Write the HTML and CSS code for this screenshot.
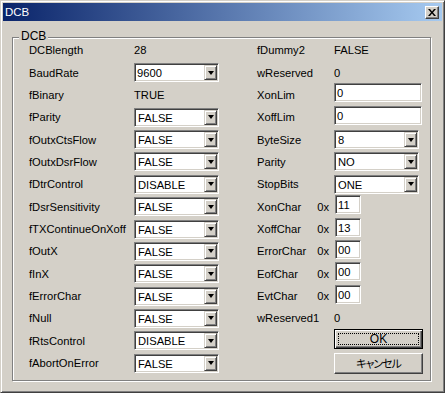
FILE: index.html
```html
<!DOCTYPE html>
<html lang="ja">
  <head>
    <meta charset="UTF-8" />
    <title>DCB</title>
    <link rel="stylesheet" href="styles.css">
  </head>
  <body>
    <div class="window">
      <div class="titlebar">
        <span class="title">DCB</span>
        <span class="close">
          <svg width="8" height="7" viewBox="0 0 8 7"><path d="M0 0h2l2 2.5L6 0h2L5 3.5 8 7H6L4 4.5 2 7H0l3-3.5z" fill="#000"/></svg>
        </span>
      </div>
      <div class="group">
        <span class="group-title">DCB</span>
        <div class="grid">
          <span class="label">DCBlength</span>
          <span class="value">28</span>
          <span class="label">fDummy2</span>
          <span class="value">FALSE</span>

          <span class="label">BaudRate</span>
          <div class="combo"><span class="combo-text edit-text">9600</span><span class="combo-btn"><i class="arrow"></i></span></div>
          <span class="label">wReserved</span>
          <span class="value">0</span>

          <span class="label">fBinary</span>
          <span class="value">TRUE</span>
          <span class="label">XonLim</span>
          <div class="edit">0</div>

          <span class="label">fParity</span>
          <div class="combo"><span class="combo-text">FALSE</span><span class="combo-btn"><i class="arrow"></i></span></div>
          <span class="label">XoffLim</span>
          <div class="edit">0</div>

          <span class="label">fOutxCtsFlow</span>
          <div class="combo"><span class="combo-text">FALSE</span><span class="combo-btn"><i class="arrow"></i></span></div>
          <span class="label">ByteSize</span>
          <div class="combo"><span class="combo-text">8</span><span class="combo-btn"><i class="arrow"></i></span></div>

          <span class="label">fOutxDsrFlow</span>
          <div class="combo"><span class="combo-text">FALSE</span><span class="combo-btn"><i class="arrow"></i></span></div>
          <span class="label">Parity</span>
          <div class="combo"><span class="combo-text">NO</span><span class="combo-btn"><i class="arrow"></i></span></div>

          <span class="label">fDtrControl</span>
          <div class="combo"><span class="combo-text">DISABLE</span><span class="combo-btn"><i class="arrow"></i></span></div>
          <span class="label">StopBits</span>
          <div class="combo"><span class="combo-text">ONE</span><span class="combo-btn"><i class="arrow"></i></span></div>

          <span class="label">fDsrSensitivity</span>
          <div class="combo"><span class="combo-text">FALSE</span><span class="combo-btn"><i class="arrow"></i></span></div>
          <span class="label hex-label"><span>XonChar</span><span>0x</span></span>
          <div class="edit small">11</div>

          <span class="label">fTXContinueOnXoff</span>
          <div class="combo"><span class="combo-text">FALSE</span><span class="combo-btn"><i class="arrow"></i></span></div>
          <span class="label hex-label"><span>XoffChar</span><span>0x</span></span>
          <div class="edit small">13</div>

          <span class="label">fOutX</span>
          <div class="combo"><span class="combo-text">FALSE</span><span class="combo-btn"><i class="arrow"></i></span></div>
          <span class="label hex-label"><span>ErrorChar</span><span>0x</span></span>
          <div class="edit small">00</div>

          <span class="label">fInX</span>
          <div class="combo"><span class="combo-text">FALSE</span><span class="combo-btn"><i class="arrow"></i></span></div>
          <span class="label hex-label"><span>EofChar</span><span>0x</span></span>
          <div class="edit small">00</div>

          <span class="label">fErrorChar</span>
          <div class="combo"><span class="combo-text">FALSE</span><span class="combo-btn"><i class="arrow"></i></span></div>
          <span class="label hex-label"><span>EvtChar</span><span>0x</span></span>
          <div class="edit small">00</div>

          <span class="label">fNull</span>
          <div class="combo"><span class="combo-text">FALSE</span><span class="combo-btn"><i class="arrow"></i></span></div>
          <span class="label">wReserved1</span>
          <span class="value">0</span>

          <span class="label">fRtsControl</span>
          <div class="combo"><span class="combo-text">DISABLE</span><span class="combo-btn"><i class="arrow"></i></span></div>
          <span></span>
          <button class="btn default"><span class="focus">OK</span></button>

          <span class="label">fAbortOnError</span>
          <div class="combo"><span class="combo-text">FALSE</span><span class="combo-btn"><i class="arrow"></i></span></div>
          <span></span>
          <button class="btn"><span class="jp">キャンセル</span></button>
        </div>
      </div>
    </div>
  </body>
</html>
```

FILE: styles.css
```css
* {
  padding: 0;
  margin: 0;
  box-sizing: border-box;
}
body {
  background-color: #d4d0c8;
  font-family: "Liberation Sans", "Noto Sans CJK JP", sans-serif;
  font-size: 11.2px;
  color: #000;
}

.window {
  width: 445px;
  height: 393px;
  padding: 2px;
  background-color: #d4d0c8;
  border: 1px solid;
  border-color: #d4d0c8 #404040 #404040 #d4d0c8;
  box-shadow: inset 1px 1px #fff, inset -1px -1px #808080;
}

.titlebar {
  height: 18px;
  display: flex;
  align-items: center;
  justify-content: space-between;
  padding: 0 3px 0 2px;
  background: linear-gradient(to right, #0a246a, #a6caf0);
  color: #fff;
  font-size: 11.5px;
}
.close {
  width: 14px;
  height: 13px;
  display: flex;
  align-items: center;
  justify-content: center;
  background-color: #d4d0c8;
  border: 1px solid;
  border-color: #fff #404040 #404040 #fff;
  box-shadow: inset -1px -1px #808080;
}

.group {
  position: relative;
  width: 419px;
  height: 344px;
  margin: 16px 0 0 9px;
  padding: 1px 0 0 16px;
  border: 1px solid #808080;
  box-shadow: inset 1px 1px #fff, 1px 1px #fff;
}
.group-title {
  position: absolute;
  top: -9px;
  left: 6px;
  padding: 0 2px;
  line-height: 14px;
  font-size: 12px;
  background-color: #d4d0c8;
}

.grid {
  display: grid;
  grid-template-columns: 105px 123px 77px 88px;
  grid-template-rows: repeat(15, 22.36px);
  align-items: center;
}
.label,
.value {
  line-height: 14px;
  white-space: nowrap;
}
.hex-label {
  display: flex;
  justify-content: space-between;
  padding-right: 5px;
}

.combo {
  width: 85px;
  height: 19px;
  display: flex;
  padding: 1px;
  background-color: #fff;
  border: 1px solid;
  border-color: #808080 #fff #fff #808080;
  box-shadow: inset 1px 1px #404040, inset -1px -1px #d4d0c8;
}
.combo-text {
  flex: 1;
  padding: 1px 0 0 2px;
  line-height: 14px;
}
.combo-text.edit-text {
  padding-left: 1px;
}
.combo-btn {
  width: 13px;
  height: 15px;
  display: flex;
  align-items: center;
  justify-content: center;
  background-color: #d4d0c8;
  border: 1px solid;
  border-color: #d4d0c8 #404040 #404040 #d4d0c8;
  box-shadow: inset 1px 1px #fff, inset -1px -1px #808080;
}
.arrow {
  width: 1px;
  border-left: 3px solid transparent;
  border-right: 3px solid transparent;
  border-top: 4px solid #000;
}

.edit {
  width: 88px;
  height: 19px;
  margin-bottom: 4px;
  padding: 2px 2px 0;
  line-height: 14px;
  background-color: #fff;
  border: 1px solid;
  border-color: #808080 #fff #fff #808080;
  box-shadow: inset 1px 1px #404040, inset -1px -1px #d4d0c8;
}
.edit.small {
  width: 26px;
  margin-left: 1px;
}

.btn {
  width: 89px;
  height: 21px;
  display: flex;
  align-items: center;
  justify-content: center;
  font: inherit;
  color: #000;
  background-color: #d4d0c8;
  border: 1px solid;
  border-color: #fff #404040 #404040 #fff;
  box-shadow: inset -1px -1px #808080;
}
.btn.default {
  height: 20px;
  margin-bottom: 4px;
  padding: 3px;
  border-color: #000;
  box-shadow: inset 1px 1px #fff, inset -1px -1px #404040, inset -2px -2px #808080;
}
.focus {
  flex: 1;
  align-self: stretch;
  display: flex;
  align-items: center;
  justify-content: center;
  border: 1px dotted #000;
  font-size: 12px;
}
.jp {
  font-family: "Noto Sans CJK JP", sans-serif;
  font-size: 11px;
  font-feature-settings: "palt";
  letter-spacing: -1px;
}
```
